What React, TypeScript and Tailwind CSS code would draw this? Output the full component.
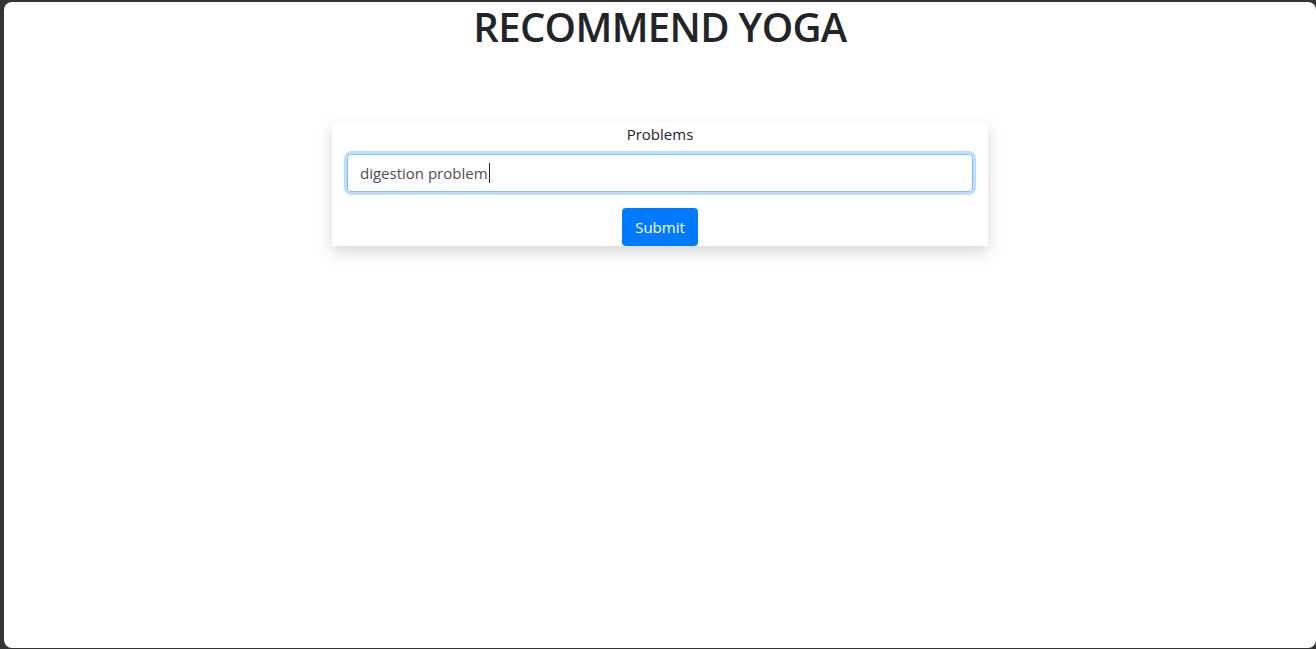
import React from "react";

export default function App() {
  return (
    <div className="h-[649px] w-[1316px] bg-[#333333] pl-[4px] pt-[2px] pb-[1px] overflow-hidden">
      <div
        className="h-full w-full bg-white rounded-[8px] text-[#212529]"
        style={{ fontFamily: '"Open Sans", "Noto Sans", sans-serif' }}
      >
        <h1 className="text-center text-[40px] leading-[50px] font-semibold tracking-[-0.65px] mb-[70px]">
          RECOMMEND YOGA
        </h1>
        <div className="mx-auto w-[656px] bg-white shadow-[0_6px_14px_rgba(0,0,0,0.16)] px-[15px]">
          <div className="text-center text-[15px] leading-[24px]">Problems</div>
          <div className="mt-[8px] h-[38px] rounded-[4px] border border-[#80bdff] shadow-[0_0_0_3px_rgba(0,123,255,0.25)] flex items-center px-[12px] text-[15px] text-[#495057]">
            <span>digestion problem</span>
            <span className="w-px h-[20px] bg-[#222] ml-[1px]" />
          </div>
          <div className="flex justify-center mt-[16px]">
            <button className="h-[38px] w-[76px] rounded-[4px] bg-[#007bff] text-white text-[15px]">
              Submit
            </button>
          </div>
        </div>
      </div>
    </div>
  );
}
